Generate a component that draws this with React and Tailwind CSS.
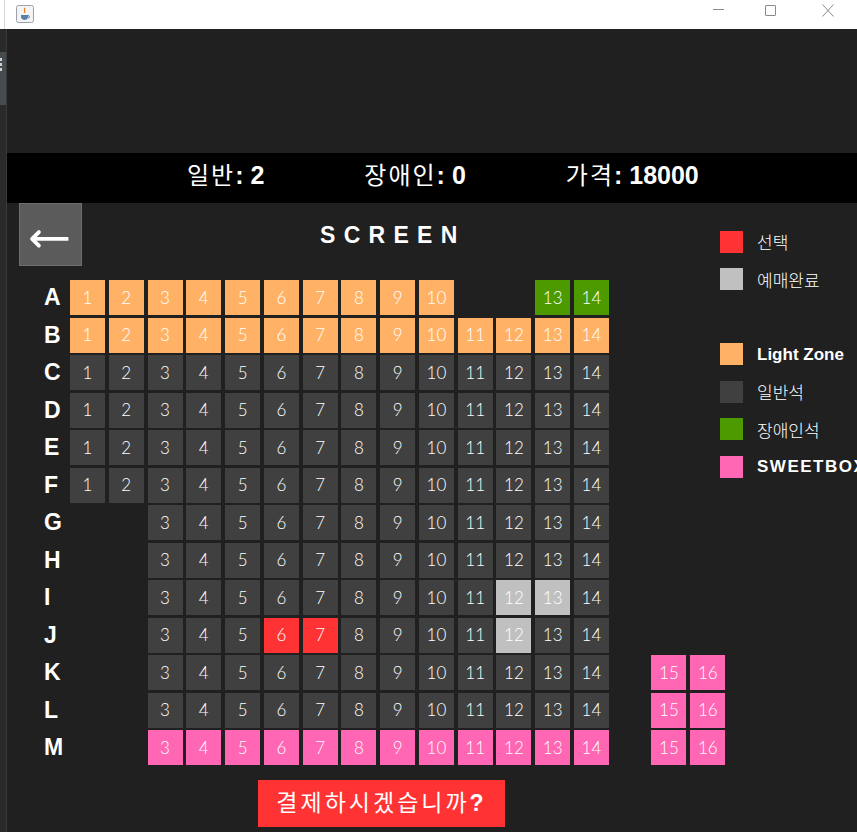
import React from "react";

const SEAT_BG = {
    o: "bg-[#ffb266]",
    d: "bg-[#404040]",
    g: "bg-[#4c9900]",
    p: "bg-[#ff66b3]",
    r: "bg-[#ff3333]",
    s: "bg-[#c0c0c0]",
};

// seat map: [row, {number: colour}]
const range = (a, b, c) => {
    const out = {};
    for (let i = a; i <= b; i++) out[i] = c;
    return out;
};

const ROWS = [
    ["A", { ...range(1, 10, "o"), 13: "g", 14: "g" }],
    ["B", range(1, 14, "o")],
    ["C", range(1, 14, "d")],
    ["D", range(1, 14, "d")],
    ["E", range(1, 14, "d")],
    ["F", range(1, 14, "d")],
    ["G", range(3, 14, "d")],
    ["H", range(3, 14, "d")],
    ["I", { ...range(3, 14, "d"), 12: "s", 13: "s" }],
    ["J", { ...range(3, 14, "d"), 6: "r", 7: "r", 12: "s" }],
    ["K", { ...range(3, 16, "d"), 15: "p", 16: "p" }],
    ["L", { ...range(3, 16, "d"), 15: "p", 16: "p" }],
    ["M", range(3, 16, "p")],
];

const LEGEND = [
    { c: "bg-[#ff3333]", t: "선택", kind: "ko" },
    { c: "bg-[#c0c0c0]", t: "예매완료", kind: "ko" },
    null,
    { c: "bg-[#ffb266]", t: "Light Zone", kind: "en" },
    { c: "bg-[#404040]", t: "일반석", kind: "ko" },
    { c: "bg-[#4c9900]", t: "장애인석", kind: "ko" },
    { c: "bg-[#ff66b3]", t: "SWEETBOX", kind: "wide" },
];

const JavaIcon = () => (
    <svg width="18" height="18" viewBox="0 0 18 18">
        <rect x="0.5" y="0.5" width="17" height="17" rx="2" fill="#f4f4f4" stroke="#9aa3ad" />
        <path d="M9 3 C7 5 10 6 8.5 8" stroke="#e07a1f" strokeWidth="1.2" fill="none" />
        <path d="M5 10 H12 V12 C12 14 10 15 8.5 15 C7 15 5 14 5 12 Z" fill="#5a7fa8" />
        <path d="M12 10.5 C14 10.5 14 13 12 13" stroke="#5a7fa8" strokeWidth="1" fill="none" />
    </svg>
);

const TitleBar = () => (
    <div className="h-[29px] bg-white flex items-center shrink-0">
        <div className="w-[1px] h-full bg-[#d8d8d8] ml-[4px]"></div>
        <div className="ml-[11px] mt-[-2px]">
            <JavaIcon />
        </div>
        <div className="ml-auto flex items-center h-full">
            <div className="w-[46px] flex justify-center">
                <div className="w-[11px] h-[1px] bg-[#8a8a8a] mt-[-6px]"></div>
            </div>
            <div className="w-[58px] flex justify-center">
                <div className="w-[11px] h-[11px] border border-[#8a8a8a] rounded-[1px] mt-[-8px]"></div>
            </div>
            <div className="w-[58px] flex justify-center">
                <svg width="12" height="13" viewBox="0 0 12 13" className="mt-[-9px]">
                    <path d="M0.5 0.5 L11.5 12.5 M11.5 0.5 L0.5 12.5" stroke="#8a8a8a" strokeWidth="1" />
                </svg>
            </div>
        </div>
    </div>
);

const SideStrip = () => (
    <div className="w-[7px] shrink-0 bg-[#2a2a2a] border-r border-[#3a3a3a] flex flex-col">
        <div className="h-[23px]"></div>
        <div className="h-[53px] bg-[#474c4f] flex flex-col gap-[2px] pt-[6px]">
            <div className="w-[2px] h-[3px] bg-[#d0d0d0]"></div>
            <div className="w-[2px] h-[3px] bg-[#d0d0d0]"></div>
            <div className="w-[2px] h-[3px] bg-[#d0d0d0]"></div>
        </div>
    </div>
);

const Stat = ({ label, value }) => (
    <div className="flex items-baseline text-white whitespace-nowrap">
        <span className="text-[24px] tracking-[2px] font-['Noto_Sans_CJK_KR',sans-serif]">{label}</span>
        <span className="text-[25px] font-bold font-['Liberation_Sans',sans-serif]">: {value}</span>
    </div>
);

const Seat = ({ n, c }) => (
    <div className={"w-[35px] h-[35px] flex items-center justify-center text-white text-[17px] font-light font-['Lato','Noto_Sans_CJK_KR',sans-serif] " + SEAT_BG[c]}>
        {n}
    </div>
);

const SeatRow = ({ label, seats }) => {
    const cells = [];
    for (let pos = 1; pos <= 17; pos++) {
        // 15th slot is an aisle, sweetbox seats 15/16 sit in slots 16/17
        const n = pos <= 14 ? pos : pos === 15 ? null : pos - 1;
        if (n && seats[n]) cells.push(<Seat key={pos} n={n} c={seats[n]} />);
        else cells.push(<div key={pos} className="w-[35px] h-[35px]"></div>);
    }
    return (
        <div className="flex items-center h-[35px] w-max">
            <div className="w-[26px] shrink-0 text-white text-[23px] font-bold font-['Liberation_Sans',sans-serif] leading-none">
                {label}
            </div>
            <div className="shrink-0 grid grid-cols-[repeat(17,35px)] gap-x-[3.77px]">{cells}</div>
        </div>
    );
};

const Legend = () => (
    <div className="flex flex-col pt-[20px] pl-[7px]">
        {LEGEND.map((item, i) =>
            item ? (
                <div key={i} className="h-[37.5px] flex items-center gap-[14px] whitespace-nowrap">
                    <div className={"w-[23px] h-[22px] shrink-0 " + item.c}></div>
                    {item.kind === "ko" && (
                        <span className="text-white text-[17px] font-light font-['Noto_Sans_CJK_KR',sans-serif]">{item.t}</span>
                    )}
                    {item.kind === "en" && (
                        <span className="text-white text-[17px] font-bold font-['Liberation_Sans',sans-serif]">{item.t}</span>
                    )}
                    {item.kind === "wide" && (
                        <span className="text-white text-[17px] font-bold tracking-[1.5px] font-['Liberation_Sans',sans-serif]">{item.t}</span>
                    )}
                </div>
            ) : (
                <div key={i} className="h-[37.5px]"></div>
            )
        )}
    </div>
);

export default function App() {
    return (
        <div className="w-[857px] h-[832px] overflow-hidden bg-[#202020] flex flex-col">
            <TitleBar />
            <div className="flex flex-1">
                <SideStrip />
                <div className="flex-1 flex flex-col">
                    <div className="h-[124px]"></div>

                    {/* selection summary */}
                    <div className="h-[50px] bg-black flex items-center pl-[180px] gap-[100px] pb-[5px]">
                        <Stat label="일반" value="2" />
                        <Stat label="장애인" value="0" />
                        <Stat label="가격" value="18000" />
                    </div>

                    <div className="flex">
                        <div className="w-[706px] shrink-0 flex flex-col">
                            <div className="h-[77px] flex items-start">
                                <button className="ml-[12px] w-[63px] h-[63px] bg-[#5b5b5b] border border-[#6e6e6e]">
                                    <svg viewBox="0 0 63 63" className="w-full h-full">
                                        <path d="M13 36 H50" stroke="white" strokeWidth="4" />
                                        <path d="M19.5 29 L12.5 36 L19.5 43" stroke="white" strokeWidth="4" fill="none" strokeLinecap="round" strokeLinejoin="round" />
                                    </svg>
                                </button>
                                <div className="ml-[238px] mt-[21px] text-white text-[23px] leading-[23px] font-bold tracking-[8.3px] font-['Liberation_Sans',sans-serif]">
                                    SCREEN
                                </div>
                            </div>

                            <div className="ml-[37px] flex flex-col gap-[2.5px]">
                                {ROWS.map(([label, seats]) => (
                                    <SeatRow key={label} label={label} seats={seats} />
                                ))}
                            </div>

                            <button className="ml-[251px] mt-[15px] w-[247px] h-[47px] bg-[#ff3333] text-white text-[23px] tracking-[3px] font-['Liberation_Sans','Noto_Sans_CJK_KR',sans-serif] flex items-center justify-center">
                                결제하시겠습니까<span className="font-bold">?</span>
                            </button>
                        </div>

                        <Legend />
                    </div>
                </div>
            </div>
        </div>
    );
}
